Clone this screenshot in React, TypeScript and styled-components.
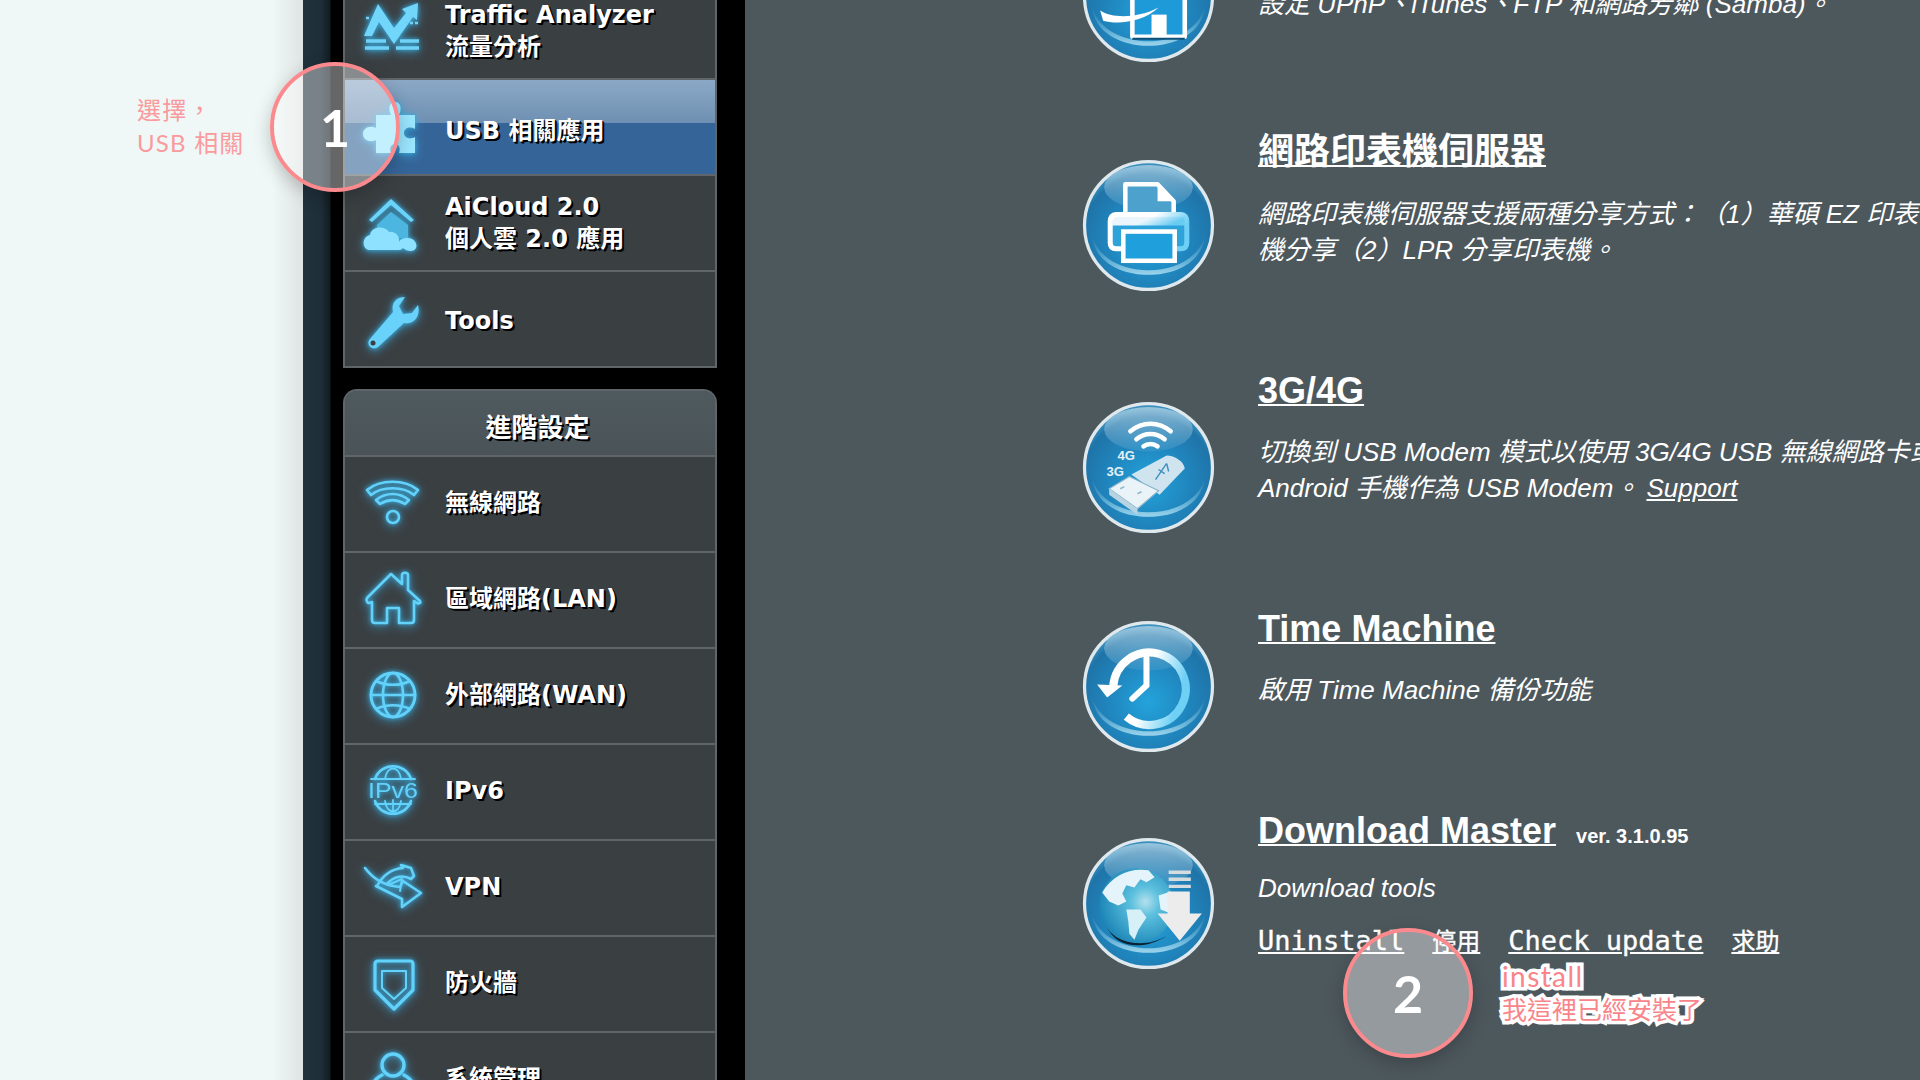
import React from "react";
import styled, { createGlobalStyle } from "styled-components";

const CJK = `"Noto Sans CJK TC", "Noto Sans CJK SC"`;

const Global = createGlobalStyle`
  html, body { margin: 0; padding: 0; background: #4d585d; overflow: hidden; }
`;

const Page = styled.div`
  position: relative;
  width: 1920px;
  height: 1080px;
  overflow: hidden;
  display: grid;
  grid-template-columns: 303px 442px 1fr;
`;

const Gutter = styled.aside`
  background: linear-gradient(90deg, #eff8f6 0, #eff8f6 272px, #dfe4e3 303px);
  padding: 93px 0 0 137px;
  color: #fb9a9d;
  font: 400 24px/33px "Lato", ${CJK}, sans-serif;
  letter-spacing: 1.2px;
`;

const GutterLine = styled.div`
  white-space: nowrap;
`;

const Rail = styled.nav`
  background: linear-gradient(90deg, #20323d 0, #1e2e38 18px, #121c21 27px, #000 28px);
  padding: 0 28px 0 40px;
  display: flex;
  flex-direction: column;
  gap: 21px;
`;

const TopPanel = styled.section`
  margin-top: -16px;
  background: #3a3f42;
  border: 2px solid #5f6568;
  border-top: 0;
`;

const AdvancedPanel = styled.section`
  background: #3a3f42;
  border: 2px solid #5f6568;
  border-bottom: 0;
  border-radius: 14px 14px 0 0;
  overflow: hidden;
`;

const PanelHead = styled.h2`
  margin: 0;
  height: 64px;
  box-sizing: border-box;
  padding: 10px 0 0 15px;
  background: linear-gradient(180deg, #4f5a5e, #4a5458);
  color: #fff;
  font: 700 26px/54px "DejaVu Sans", ${CJK}, sans-serif;
  text-align: center;
  text-shadow: 1px 1px 0 #000, 2px 2px 0 #000;
`;

const MenuRow = styled.div<{ $active?: boolean; $first?: boolean }>`
  height: 94px;
  display: flex;
  align-items: center;
  gap: 17px;
  padding-left: 13px;
  border-top: ${(p) => (p.$first ? "0" : "2px solid #5f6568")};
  background: ${(p) =>
    p.$active
      ? "linear-gradient(180deg, #8ba8c6 0, #6f90b2 46%, #356598 46%, #356598 100%)"
      : "transparent"};
`;

const MenuIcon = styled.svg`
  width: 70px;
  height: 70px;
  flex: none;
  overflow: visible;
  filter: drop-shadow(0 0 2px #3aaee2) drop-shadow(0 2px 5px rgba(58, 174, 226, 0.65));
`;

const MenuLabel = styled.div<{ $shift?: number }>`
  color: #fff;
  font: 700 24px/32px "DejaVu Sans", ${CJK}, sans-serif;
  text-shadow: 1px 1px 0 #000, 2px 2px 0 #000;
  white-space: nowrap;
  margin-top: ${(p) => Math.max(p.$shift ?? 0, 0)}px;
  margin-bottom: ${(p) => Math.max(-(p.$shift ?? 0), 0)}px;
`;

const Main = styled.main`
  background: #4d585d;
  padding-left: 337px;
  margin-top: -80px;
  color: #fff;
`;

const Feature = styled.article<{ $height: number }>`
  height: ${(p) => p.$height}px;
  display: flex;
  align-items: flex-start;
  gap: 43px;
`;

const Disc = styled.svg<{ $top: number }>`
  width: 133px;
  height: 133px;
  flex: none;
  margin-top: ${(p) => p.$top}px;
`;

const Copy = styled.div<{ $top?: number }>`
  width: 800px;
  flex: none;
  margin-top: ${(p) => p.$top ?? 0}px;
`;

const TitleRow = styled.div`
  display: flex;
  align-items: baseline;
  gap: 20px;
  height: 44px;
`;

const Title = styled.a`
  color: #fff;
  font: 700 36px/44px "Liberation Sans", ${CJK}, sans-serif;
  text-decoration: underline;
  text-decoration-thickness: 2px;
  white-space: nowrap;
`;

const Version = styled.span`
  font: 700 20px/24px "Liberation Sans", sans-serif;
`;

const Description = styled.p<{ $gap?: number }>`
  margin: ${(p) => p.$gap ?? 22}px 0 0;
  width: 800px;
  font: italic 400 26px/36px "Liberation Sans", ${CJK}, sans-serif;
  white-space: nowrap;
  text-spacing-trim: space-all;
`;

const Support = styled.a`
  color: #fff;
  text-decoration: underline;
  margin-left: 7px;
`;

const LinkRow = styled.div`
  margin-top: 18px;
  display: flex;
  align-items: baseline;
  gap: 28px;
`;

const ActionLink = styled.a<{ $cjk?: boolean }>`
  color: #fff;
  text-decoration: underline;
  white-space: nowrap;
  -webkit-text-stroke: 0.35px #fff;
  font: ${(p) => (p.$cjk ? "400 24px/34px" : "400 27px/34px")} "DejaVu Sans Mono", ${CJK}, monospace;
`;

const Marker = styled.div<{ $x: number; $y: number }>`
  position: absolute;
  left: ${(p) => p.$x - 65}px;
  top: ${(p) => p.$y - 65}px;
  width: 130px;
  height: 130px;
  box-sizing: border-box;
  border-radius: 50%;
  border: 4px solid #fb8a8e;
  background: rgba(255, 255, 255, 0.4);
  box-shadow: 0 6px 18px rgba(0, 0, 0, 0.22);
  display: flex;
  align-items: center;
  justify-content: center;
  color: #fff;
  font: 700 52px/1 "Lato", sans-serif;
`;

const Note = styled.div`
  position: absolute;
  left: 1502px;
  top: 960px;
  color: #f9858a;
  font: 400 25px/33px "Lato", ${CJK}, sans-serif;
  -webkit-text-stroke: 7px #fff;
  paint-order: stroke fill;
  white-space: nowrap;
`;

const NoteLatin = styled.div`
  font-size: 28px;
  letter-spacing: 1.4px;
`;

const Blue = "#63d2fa";

const stroke = { fill: "none", stroke: Blue, strokeWidth: 2.6, strokeLinecap: "round", strokeLinejoin: "round" } as const;

const TrafficIcon = () => (
  <MenuIcon viewBox="0 0 70 70">
    <path d="M6 40 L20 8 L36 32 L48 17 L44 13 L60 7 L59 24 L55 21 L36 48 L21 26 L14 40 Z" fill="#72d6fb" />
    <path d="M8 45 H28 M42 45 H61 M7 52 H31 M38 52 H61" stroke="#6fd2f6" strokeWidth="3.5" fill="none" />
    <path d="M8 22 H13 M47 27 H60" stroke="#6fd2f6" strokeWidth="2.5" strokeDasharray="3 2" fill="none" />
  </MenuIcon>
);

const PuzzleIcon = () => (
  <MenuIcon viewBox="0 0 70 70">
    <path
      d="M18 23 H33 C30 17 31 10 37 10 C43 10 44 17 41 23 H57 V37 C52 34 46 36 46 41 C46 46 52 48 57 45 V61 H41 C43 56 41 52 37 52 C33 52 31 56 33 61 H18 V48 C12 51 5 48 5 42 C5 36 12 33 18 36 Z"
      fill="#9be6ff"
    />
  </MenuIcon>
);

const CloudHouseIcon = () => (
  <MenuIcon viewBox="0 0 70 70">
    <path d="M11 32 L33 11 L56 32 L53 34 L33 17 L14 34 Z" fill="#6cd4fb" />
    <path d="M19 37 L33 24 L50 37 V50 H19 Z" fill="#4cb5e0" />
    <path
      d="M12 62 C4 62 3 49 12 47 C13 38 27 37 31 44 C37 43 42 48 41 54 C43 51 44 50 50 50 C59 50 62 62 53 63 C50 63 47 62 45 60 C44 61 43 62 41 62 Z"
      fill="#8ee2ff"
    />
  </MenuIcon>
);

const WrenchIcon = () => (
  <MenuIcon viewBox="0 0 70 70">
    <path
      d="M47 13 L41 22 L45 30 L54 29 L60 21 C63 32 56 41 46 39 L20 63 C15 67 7 61 12 55 L35 28 C33 19 38 13 47 13 Z"
      fill="#68d2fb"
    />
    <circle cx="15" cy="59" r="2.5" fill="#3a3f42" />
  </MenuIcon>
);

const WifiIcon = () => (
  <MenuIcon viewBox="0 0 70 70">
    <path {...stroke} d="M9 21 C22 10 47 10 60 21 L56 26 C45 17 24 17 13 26 Z" />
    <path {...stroke} d="M18 31 C28 23 41 23 51 31 L47 35 C39 30 30 30 22 35 Z" />
    <circle {...stroke} cx="35" cy="48" r="6" />
  </MenuIcon>
);

const HouseIcon = () => (
  <MenuIcon viewBox="0 0 70 70">
    <path
      {...stroke}
      d="M9 33 L33 9 L44 19 V10 C44 7 50 7 50 10 V25 L62 36 C63 38 61 39 59 38 L56 36 V55 C56 57 55 58 53 58 H41 V43 H29 V58 H17 C15 58 14 57 14 55 V37 L11 38 C9 38 8 35 9 33 Z"
    />
  </MenuIcon>
);

const GlobeIcon = () => (
  <MenuIcon viewBox="0 0 70 70">
    <circle {...stroke} cx="35" cy="34" r="22" strokeWidth="3" />
    <ellipse {...stroke} cx="35" cy="34" rx="10" ry="22" />
    <path {...stroke} d="M13 34 H57 M18 20 C28 25 42 25 52 20 M18 48 C28 43 42 43 52 48" />
  </MenuIcon>
);

const Ipv6Icon = () => (
  <MenuIcon viewBox="0 0 70 70">
    <path {...stroke} d="M17 22 C23 5 47 5 53 22 M17 44 C23 61 47 61 53 44" />
    <path {...stroke} d="M27 22 C29 8 41 8 43 22 M27 44 C29 58 41 58 43 44 M13 22 H57 M17 47 H53 M35 43 V56" strokeWidth="1.8" />
    <text x="35" y="41" textAnchor="middle" fill={Blue} fontFamily="Liberation Sans" fontSize="22" textLength="50" lengthAdjust="spacingAndGlyphs">
      IPv6
    </text>
  </MenuIcon>
);

const VpnIcon = () => (
  <MenuIcon viewBox="0 0 70 70">
    <path {...stroke} d="M7 15 C16 27 28 33 42 34 L45 28 L63 40 L44 54 L44 46 L18 33" />
    <path {...stroke} d="M19 33 C25 22 33 16 45 15 L43 12 L53 15 L56 23 L53 26 C44 21 35 24 29 31" />
    <path {...stroke} d="M30 32 L44 26 L42 38" strokeWidth="2" />
  </MenuIcon>
);

const ShieldIcon = () => (
  <MenuIcon viewBox="0 0 70 70">
    <path {...stroke} strokeWidth="3.2" d="M20 12 H52 C54 12 55 13 55 15 V41 L36 60 L17 41 V15 C17 13 18 12 20 12 Z" />
    <path {...stroke} strokeWidth="2" d="M24 22 H48 V39 L36 50 L24 39 Z" />
  </MenuIcon>
);

const UserIcon = () => (
  <MenuIcon viewBox="0 0 70 70">
    <circle {...stroke} strokeWidth="3.4" cx="35" cy="20" r="11" />
    <path {...stroke} strokeWidth="3.4" d="M24 30 C14 35 11 44 11 56 H59 C59 44 56 35 46 30" />
  </MenuIcon>
);

type DiscProps = { id: string; top: number; children: React.ReactNode };

const GlossDisc = ({ id, top, children }: DiscProps) => (
  <Disc viewBox="0 0 132 132" $top={top}>
    <defs>
      <radialGradient id={`${id}-base`} cx="50%" cy="62%" r="58%">
        <stop offset="0" stopColor="#24a3db" />
        <stop offset="0.55" stopColor="#2085bd" />
        <stop offset="0.9" stopColor="#1f74a8" />
        <stop offset="1" stopColor="#3a8fbe" />
      </radialGradient>
      <linearGradient id={`${id}-gloss`} x1="0" y1="0" x2="0" y2="1">
        <stop offset="0" stopColor="#cfe4ef" stopOpacity="0.62" />
        <stop offset="1" stopColor="#b7dbee" stopOpacity="0.1" />
      </linearGradient>
      <linearGradient id={`${id}-lip`} x1="0" y1="0" x2="0" y2="1">
        <stop offset="0" stopColor="#5fb6dc" stopOpacity="0" />
        <stop offset="1" stopColor="#a4d8ee" stopOpacity="0.95" />
      </linearGradient>
      <linearGradient id={`${id}-line`} x1="0" y1="0" x2="1" y2="0.3">
        <stop offset="0" stopColor="#ffffff" />
        <stop offset="0.55" stopColor="#ffffff" />
        <stop offset="1" stopColor="#6fd0f5" />
      </linearGradient>
    </defs>
    <circle cx="66" cy="66" r="63.5" fill={`url(#${id}-base)`} stroke="#dfe9ed" strokeWidth="3.2" />
    <ellipse cx="66" cy="28" rx="44" ry="22" fill={`url(#${id}-gloss)`} />
    <path d="M10 76 C22 122 110 122 122 76 C118 128 14 128 10 76 Z" fill={`url(#${id}-lip)`} />
    {children}
  </Disc>
);

const SambaGlyph = ({ top }: { top: number }) => (
  <GlossDisc id="samba" top={top}>
    <path d="M26 44 L76 12 L112 44 L102 46 V106 H50 V46 Z" fill="#1f9ad8" stroke="#fff" strokeWidth="4.5" strokeLinejoin="round" />
    <rect x="69" y="84" width="15" height="22" fill="#fff" />
    <path d="M50 108 H102" stroke="#0e4f78" strokeWidth="2" />
    <path d="M18 80 C30 88 55 88 76 77 C60 92 35 94 21 90 Z" fill="#fff" />
    <path d="M42 66 C50 66 56 62 60 56" fill="none" stroke="#fff" strokeWidth="6" />
  </GlossDisc>
);

const PrinterGlyph = ({ top }: { top: number }) => (
  <GlossDisc id="print" top={top}>
    <path d="M43 54 V25 H75 L91 42 V54" fill="#4da2cd" stroke="#fff" strokeWidth="4.5" strokeLinejoin="round" />
    <path d="M75 25 V42 H91 Z" fill="#fff" />
    <path d="M42 89 H34 C30 89 28 87 28 83 V62 C28 58 30 55 34 55 H98 C102 55 104 58 104 62 V83 C104 87 102 89 98 89 H92" fill="#2ea3da" stroke="url(#print-line)" strokeWidth="5" />
    <path d="M30 56 H102 V66 H30 Z" fill="url(#print-line)" opacity="0.9" />
    <rect x="41" y="72" width="51" height="29" fill="#1f9fdb" stroke="#fff" strokeWidth="4.5" />
  </GlossDisc>
);

const ModemGlyph = ({ top }: { top: number }) => (
  <GlossDisc id="modem" top={top}>
    <path d="M48 30 C60 20 76 20 88 30 M54 38 C62 31 74 31 82 38 M61 45 C65 42 71 42 75 45" fill="none" stroke="#fff" strokeWidth="4.5" strokeLinecap="round" />
    <text x="44" y="59" textAnchor="middle" fill="#e3f1f7" fontFamily="Liberation Sans" fontWeight="700" fontSize="13">4G</text>
    <text x="33" y="74" textAnchor="middle" fill="#e3f1f7" fontFamily="Liberation Sans" fontWeight="700" fontSize="13">3G</text>
    <path d="M49 73 L84 54 C92 54 101 60 102 67 L77 93 Z" fill="#cfe4ef" />
    <path d="M27 87 L47 75 L76 89 L55 107 Z" fill="#e9f3f8" stroke="#8fb7cc" strokeWidth="1.2" />
    <path d="M27 87 V93 L55 113 V107 Z" fill="#b8d3e1" />
    <path d="M38 87 L42 85 M55 92 L59 90" stroke="#8fb7cc" strokeWidth="1.6" />
    <path d="M73 78 L84 62 M84 62 L86 70 M76 68 L82 72" stroke="#3f8fbf" strokeWidth="1.4" fill="none" />
  </GlossDisc>
);

const ClockGlyph = ({ top }: { top: number }) => (
  <GlossDisc id="clock" top={top}>
    <path d="M31 66 A36 36 0 1 1 44 96" fill="none" stroke="url(#clock-line)" strokeWidth="8" />
    <path d="M15 64 L40 65 L25 77 Z" fill="#fff" />
    <path d="M64 38 V65 L50 78" fill="none" stroke="#fff" strokeWidth="6" strokeLinecap="round" strokeLinejoin="miter" />
  </GlossDisc>
);

const DownloadGlyph = ({ top }: { top: number }) => (
  <GlossDisc id="dl" top={top}>
    <defs>
      <radialGradient id="dl-earth" cx="62%" cy="45%" r="65%">
        <stop offset="0" stopColor="#b4e0ec" />
        <stop offset="0.3" stopColor="#5cc0de" />
        <stop offset="1" stopColor="#1882b4" />
      </radialGradient>
    </defs>
    <path d="M24 88 C34 112 64 112 84 98 C64 110 38 108 24 88 Z" fill="#0b2230" />
    <circle cx="54" cy="68" r="37" fill="url(#dl-earth)" />
    <path d="M20 55 C30 38 48 30 66 33 L72 40 L64 45 L58 42 L52 50 L44 48 L40 56 L44 64 L36 68 L27 64 Z" fill="#e4f4fa" />
    <path d="M44 72 L58 72 L64 80 L56 92 L52 102 L47 96 L46 84 Z" fill="#d7eff7" />
    <path d="M76 58 L88 54 L88 76 L78 72 Z" fill="#e4f4fa" />
    <path d="M86 35 H108 M86 42 H108 M86 49 H108" stroke="#d5dcdf" strokeWidth="3.4" />
    <path d="M85 54 H107 V76 H119 L97 103 L75 76 H85 Z" fill="#ececec" />
  </GlossDisc>
);

type Row = { key: string; icon: React.ReactNode; label: string | string[]; active?: boolean; shift?: number };

const rowsTop: Row[] = [
  { key: "usb", icon: <PuzzleIcon />, label: "USB 相關應用", active: true, shift: 7 },
  { key: "cloud", icon: <CloudHouseIcon />, label: ["AiCloud 2.0", "個人雲 2.0 應用"] },
  { key: "tools", icon: <WrenchIcon />, label: "Tools", shift: 4 },
];

const rowsAdvanced: Row[] = [
  { key: "w", icon: <WifiIcon />, label: "無線網路", shift: -2 },
  { key: "l", icon: <HouseIcon />, label: "區域網路(LAN)", shift: -2 },
  { key: "a", icon: <GlobeIcon />, label: "外部網路(WAN)", shift: -2 },
  { key: "6", icon: <Ipv6Icon />, label: "IPv6", shift: -2 },
  { key: "v", icon: <VpnIcon />, label: "VPN", shift: -2 },
  { key: "f", icon: <ShieldIcon />, label: "防火牆", shift: -2 },
  { key: "u", icon: <UserIcon />, label: "系統管理", shift: -2 },
];

const renderLabel = (label: string | string[], shift?: number) =>
  Array.isArray(label) ? (
    <MenuLabel $shift={shift}>
      {label.map((l) => (
        <div key={l}>{l}</div>
      ))}
    </MenuLabel>
  ) : (
    <MenuLabel $shift={shift}>{label}</MenuLabel>
  );

export default function App() {
  return (
    <Page>
      <Global />
      <Gutter>
        <GutterLine>選擇，</GutterLine>
        <GutterLine>USB 相關</GutterLine>
      </Gutter>
      <Rail>
        <TopPanel>
          <MenuRow $first>
            <TrafficIcon />
            {renderLabel(["Traffic Analyzer", "流量分析"])}
          </MenuRow>
          {rowsTop.map((r) => (
            <MenuRow key={r.key} $active={r.active}>
              {r.icon}
              {renderLabel(r.label, r.shift)}
            </MenuRow>
          ))}
        </TopPanel>
        <AdvancedPanel>
          <PanelHead>進階設定</PanelHead>
          {rowsAdvanced.map((r) => (
            <MenuRow key={r.key}>
              {r.icon}
              {renderLabel(r.label, r.shift)}
            </MenuRow>
          ))}
        </AdvancedPanel>
      </Rail>
      <Main>
        <Feature $height={207}>
          <SambaGlyph top={10} />
          <Copy>
            <TitleRow />
            <Description>設定 UPnP、iTunes、FTP 和網路芳鄰 (Samba)。</Description>
          </Copy>
        </Feature>
        <Feature $height={240}>
          <PrinterGlyph top={32} />
          <Copy $top={3}>
            <TitleRow>
              <Title>網路印表機伺服器</Title>
            </TitleRow>
            <Description>
              網路印表機伺服器支援兩種分享方式：（1）華碩 EZ 印表
              <br />
              機分享（2）LPR 分享印表機。
            </Description>
          </Copy>
        </Feature>
        <Feature $height={239}>
          <ModemGlyph top={34} />
          <Copy $top={2}>
            <TitleRow>
              <Title>3G/4G</Title>
            </TitleRow>
            <Description $gap={21}>
              切換到 USB Modem 模式以使用 3G/4G USB 無線網路卡或
              <br />
              Android 手機作為 USB Modem。<Support>Support</Support>
            </Description>
          </Copy>
        </Feature>
        <Feature $height={202}>
          <ClockGlyph top={14} />
          <Copy $top={1}>
            <TitleRow>
              <Title>Time Machine</Title>
            </TitleRow>
            <Description $gap={21}>啟用 Time Machine 備份功能</Description>
          </Copy>
        </Feature>
        <Feature $height={280}>
          <DownloadGlyph top={29} />
          <Copy $top={1}>
            <TitleRow>
              <Title>Download Master</Title>
              <Version>ver. 3.1.0.95</Version>
            </TitleRow>
            <Description $gap={17}>Download tools</Description>
            <LinkRow>
              <ActionLink>Uninstall</ActionLink>
              <ActionLink $cjk>停用</ActionLink>
              <ActionLink>Check update</ActionLink>
              <ActionLink $cjk>求助</ActionLink>
            </LinkRow>
          </Copy>
        </Feature>
      </Main>
      <Marker $x={335} $y={127}>1</Marker>
      <Marker $x={1408} $y={993}>2</Marker>
      <Note>
        <NoteLatin>install</NoteLatin>
        <div>我這裡已經安裝了</div>
      </Note>
    </Page>
  );
}
